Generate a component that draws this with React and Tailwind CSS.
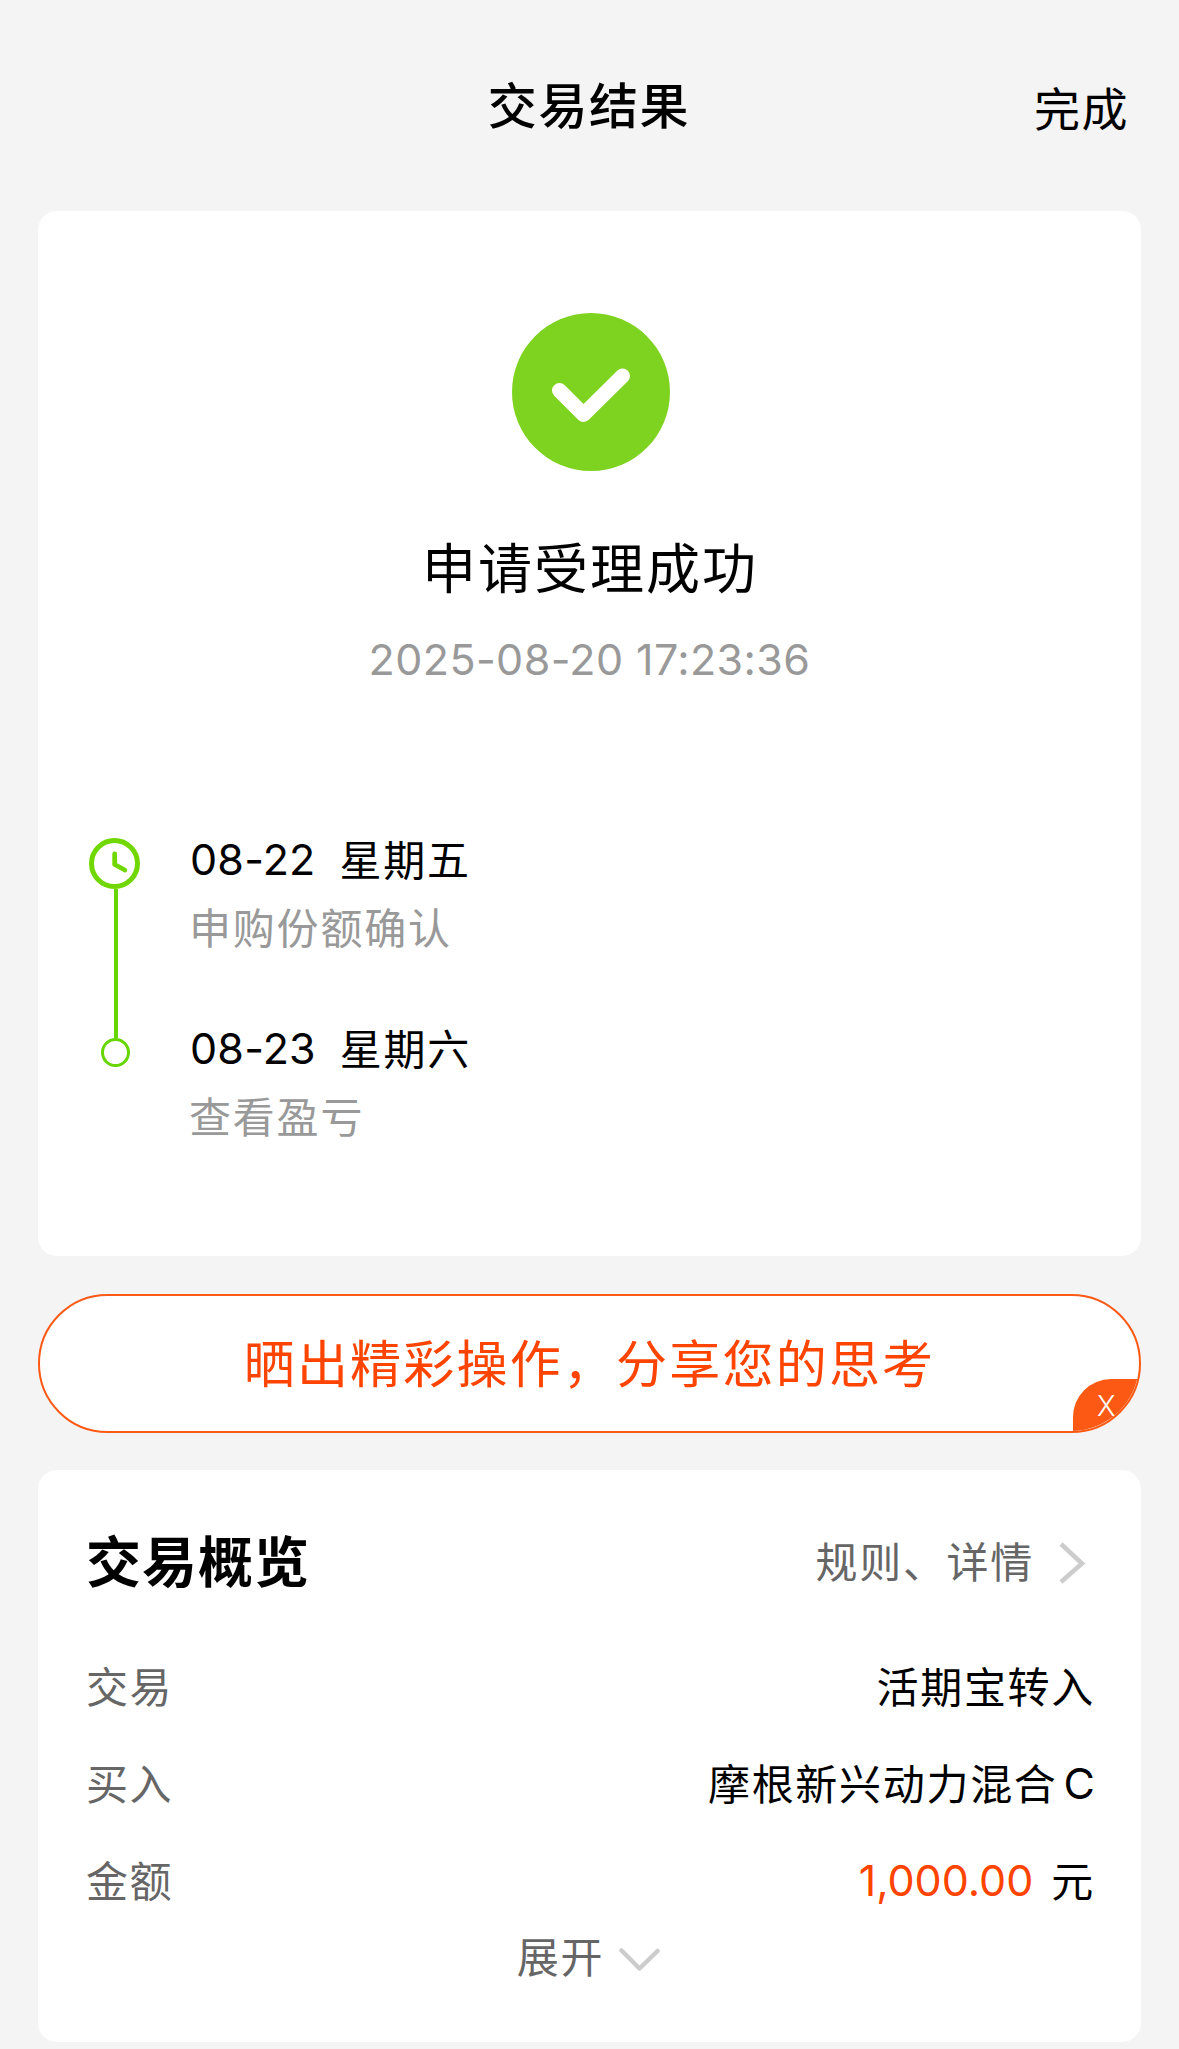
import React from 'react';

const steps = [
  { date: '08-22', week: '星期五', text: '申购份额确认' },
  { date: '08-23', week: '星期六', text: '查看盈亏' },
];

const SuccessIcon = () => (
  <svg className="ml-[2px] w-[158px] h-[158px]" viewBox="0 0 158 158" fill="none">
    <circle cx="79" cy="79" r="79" fill="#7ED321" />
    <path
      d="M47.5 77.5L71.5 101.5L110.5 63"
      stroke="#fff"
      strokeWidth="15"
      strokeLinecap="round"
      strokeLinejoin="round"
    />
  </svg>
);

const ClockIcon = () => (
  <svg className="w-[51px] h-[51px] shrink-0" viewBox="0 0 51 51" fill="none">
    <circle cx="25.5" cy="25.5" r="23" stroke="#70D800" strokeWidth="5" />
    <path
      d="M25.7 16V26.5L35.8 32"
      stroke="#70D800"
      strokeWidth="4.8"
      strokeLinecap="round"
      strokeLinejoin="round"
    />
  </svg>
);

const Row = ({ label, children }) => (
  <div className="flex items-center justify-between h-[97px]">
    <span className="pt-[4px] text-[#666] tracking-[1.6px]">{label}</span>
    <div className="flex items-center">{children}</div>
  </div>
);

const App = () => {
  return (
    <div className="w-[1179px] h-[2049px] overflow-hidden bg-[#f4f4f4] text-black font-['Inter','Noto_Sans_CJK_SC',sans-serif]">
      {/* Header */}
      <header className="grid grid-cols-3 items-center h-[211px] pl-[49px] pr-[50px]">
        <span />
        <h1 className="pt-[3px] text-center text-[49px] leading-[60px] font-medium tracking-[1.6px]">交易结果</h1>
        <button className="justify-self-end text-[46px] leading-[60px] tracking-[1.5px] pt-[7px]">完成</button>
      </header>

      {/* Result */}
      <section className="mx-[38px] h-[1045px] rounded-[19px] bg-white pt-[102px]">
        <div className="flex flex-col items-center">
          <SuccessIcon />
          <h2 className="mt-[69px] ml-px text-[54px] leading-[60px] tracking-[2px]">申请受理成功</h2>
          <p className="mt-[33px] text-[43px] leading-[52px] tracking-[0.4px] text-[#999]">2025-08-20 17:23:36</p>
        </div>

        <div className="flex mt-[144px] pl-[51px]">
          <div className="flex flex-col w-[101px] pt-[9px]">
            <ClockIcon />
            <div className="ml-[25px] w-[4px] h-[149px] bg-[#66d500]"></div>
            <div className="ml-[12px] w-[29px] h-[29px] rounded-full border-[3px] border-[#66d500]"></div>
          </div>
          <div className="space-y-[59px] text-[42px] leading-[60px]">
            {steps.map(step => (
              <div key={step.date}>
                <div className="flex items-start h-[60px] gap-[24px]">
                  <span className="text-[43px] tracking-[0.2px]">{step.date}</span>
                  <span className="pt-[2px] tracking-[1.7px]">{step.week}</span>
                </div>
                <div className="mt-[10px] -ml-px text-[#999] tracking-[1.8px]">{step.text}</div>
              </div>
            ))}
          </div>
        </div>
      </section>

      {/* Share banner */}
      <div className="relative mx-[38px] mt-[38px] h-[139px] overflow-hidden rounded-full border-2 border-[#fc5a14] bg-white flex items-center justify-center">
        <span className="pt-[3px] text-[51px] leading-[60px] tracking-[2.2px] text-[#ff4400]">晒出精彩操作，分享您的思考</span>
        <button className="absolute right-[-2px] bottom-[-2px] w-[68px] h-[54px] rounded-tl-[38px] bg-[#fc5a14] pl-[24px] text-left text-[28px] leading-[52px] font-light text-white">
          X
        </button>
      </div>

      {/* Overview */}
      <section className="mx-[38px] mt-[37px] h-[572px] rounded-[19px] bg-white pt-[61px] pl-[48px] pr-[46px] text-[42px] leading-[60px]">
        <div className="flex items-center justify-between mb-[44px]">
          <h3 className="text-[55px] font-bold tracking-[1px]">交易概览</h3>
          <div className="flex items-center pr-[9px] pt-[2px]">
            <span className="text-[#666] tracking-[1.7px]">规则、详情</span>
            <svg className="ml-[25px] w-[27px] h-[42px]" viewBox="0 0 27 42" fill="none">
              <path d="M2 2L23 21.5L2 40" stroke="#ccc" strokeWidth="4.5" />
            </svg>
          </div>
        </div>

        <Row label="交易">
          <span className="pt-[4px] tracking-[1.7px]">活期宝转入</span>
        </Row>
        <Row label="买入">
          <span className="pt-[4px] tracking-[1.7px]">摩根新兴动力混合</span>
          <span className="ml-[6px] text-[43px]">C</span>
        </Row>
        <Row label="金额">
          <span className="text-[43px] text-[#ff4400]">1,000.00</span>
          <span className="ml-[18px] pt-[4px] tracking-[1.7px]">元</span>
        </Row>

        <button className="flex items-center mx-auto text-[#666]">
          <span className="tracking-[1.7px]">展开</span>
          <svg className="ml-[15px] mt-[4px] mr-[4px] w-[41px] h-[24px]" viewBox="0 0 41 24" fill="none">
            <path d="M2.5 2.5L20.5 20.5L38.5 3" stroke="#ccc" strokeWidth="4.5" strokeLinecap="round" strokeLinejoin="round" />
          </svg>
        </button>
      </section>
    </div>
  );
};

export default App;
